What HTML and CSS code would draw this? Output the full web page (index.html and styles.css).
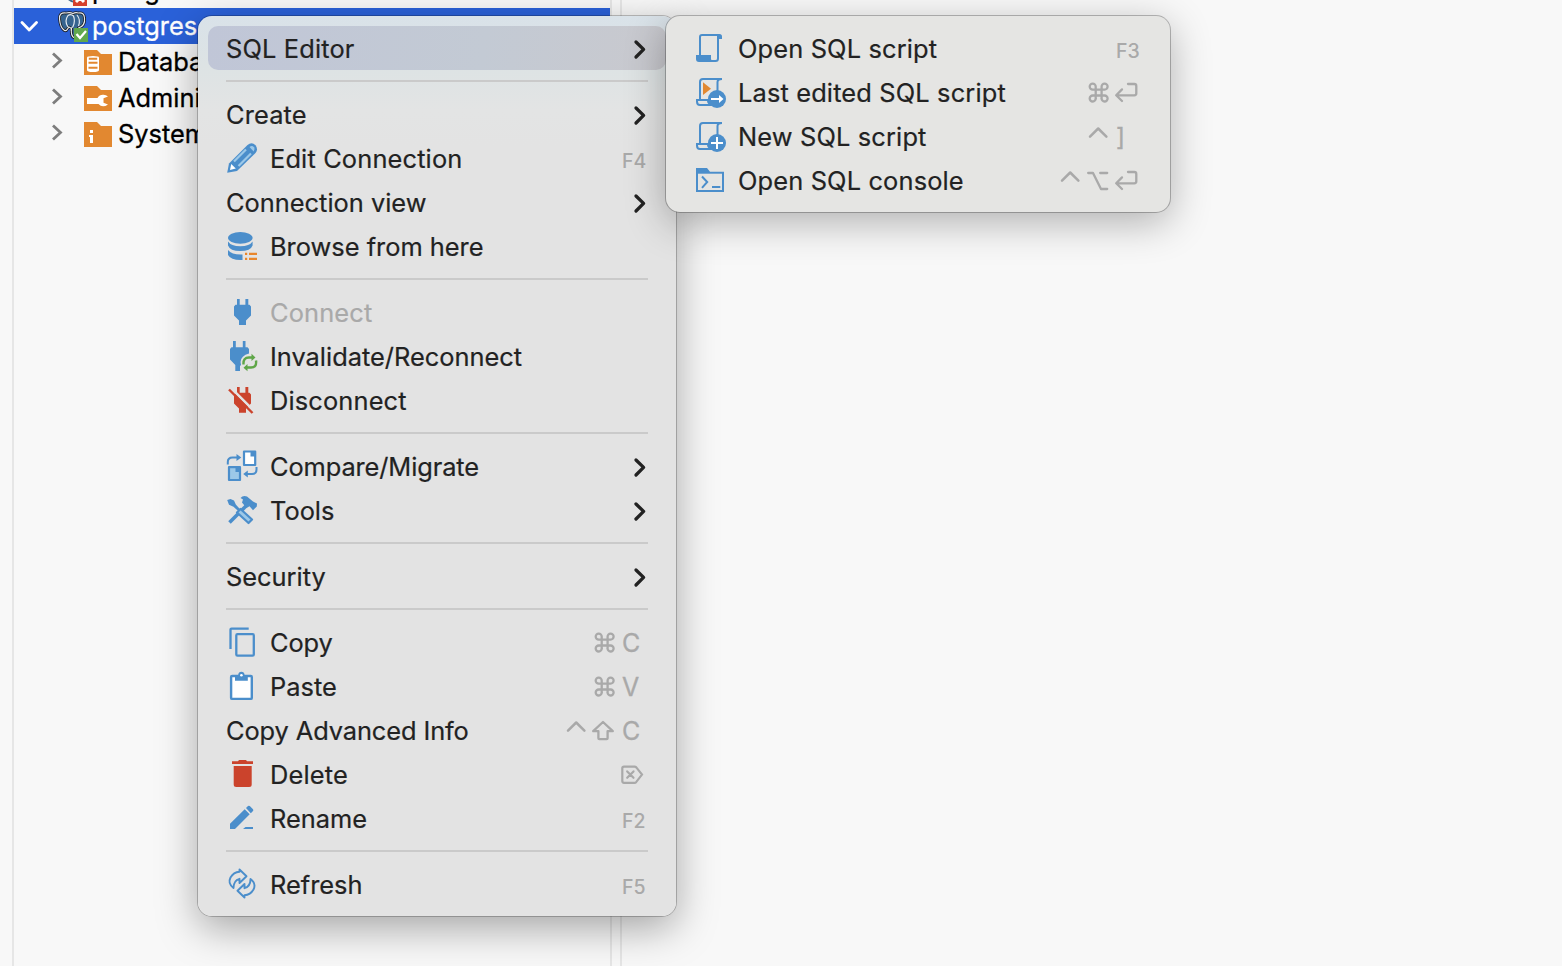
FILE: index.html
```html
<!DOCTYPE html>
<html lang="en">
<head>
<meta charset="utf-8">
<title>Database Navigator</title>
<link rel="stylesheet" href="styles.css">
</head>
<body>
<svg class="defs" aria-hidden="true">
  <symbol id="arrow" viewBox="0 0 16 24"><path d="M4 5l7.600 7.400L4 20" fill="none" stroke="#222" stroke-width="3.300" stroke-linecap="round" stroke-linejoin="round"/></symbol>
  <symbol id="k-cmd" viewBox="0 0 28 28"><path d="M7.700 11.600H4.900a3 3 0 1 1 2.800-2.900V20.400a3 3 0 1 1-2.900-2.900H16.500a3 3 0 1 1-2.900 2.900V8.700a3 3 0 1 1 2.900 2.900z" fill="none" stroke="#a9a9a9" stroke-width="2.300"/></symbol>
  <symbol id="k-ctrl" viewBox="0 0 28 28"><path d="M2 14.700L10.200 6.500l8.200 8.200" fill="none" stroke="#a9a9a9" stroke-width="2.500" stroke-linecap="round" stroke-linejoin="round"/></symbol>
  <symbol id="k-shift" viewBox="0 0 28 28"><path d="M9 6L-.8 15.200H4.400V22.200q0 1 1 1H12.600q1 0 1-1V15.200H18.800z" fill="none" stroke="#a9a9a9" stroke-width="2.300" stroke-linejoin="round"/></symbol>
  <symbol id="k-ret" viewBox="0 0 28 28"><path d="M12 6h6.300q2 0 2 2v7.300q0 2-2 2H.4M6 11.400L.2 17.300L6 23" fill="none" stroke="#a9a9a9" stroke-width="2.300" stroke-linecap="round" stroke-linejoin="round"/></symbol>
  <symbol id="k-opt" viewBox="0 0 28 28"><path d="M.2 7H5L13 23H19.200M12.200 7H19.200" fill="none" stroke="#a9a9a9" stroke-width="2.300" stroke-linecap="round" stroke-linejoin="round"/></symbol>
  <symbol id="k-del" viewBox="0 0 28 28"><path d="M2 6.600H12.500q1 0 1.800.8L20 14.600L14.300 21.900q-.8.900-1.800.9H2q-1.700 0-1.700-1.700V8.300Q.3 6.600 2 6.600zM5.200 11.400l6.300 6.400m0-6.400l-6.300 6.400" fill="none" stroke="#a9a9a9" stroke-width="2.200" stroke-linecap="round"/></symbol>
</svg>

<div class="window">
  <aside class="navigator">
    <div class="node node-above">
      <svg class="node-icon" viewBox="0 0 32 32"><path d="M5 18q6 10 12 10h8" stroke="#45688a" stroke-width="2" fill="none"/><path d="M15 18h14v14H15z" fill="#d5402c"/><path d="M18 20l8 8m0-8l-8 8" stroke="#fff" stroke-width="3"/></svg>
      <span class="node-label">postgres</span>
    </div>
    <div class="node node-selected">
      <svg class="twisty" viewBox="0 0 18 16"><path d="M2 4.500l7.200 7.400L16.500 4.500" fill="none" stroke="#fff" stroke-width="2.800" stroke-linecap="round" stroke-linejoin="round"/></svg>
      <svg class="node-icon" viewBox="0 0 32 32">
        <path d="M8 3Q1 2 1.500 9q.8 9 5 11.500 2 .8 3-1.500l1.500-2 2.500 1.500q-1 8 3 9.500 4 .5 4-5v-5q7-2 6-10-.4-6-6-5-3-1-5.500.5Q12 2 8 3z" fill="#36648f" stroke="#191919" stroke-width="2.800"/>
        <path d="M8 3Q1 2 1.500 9q.8 9 5 11.500 2 .8 3-1.500l1.500-2 2.500 1.500q-1 8 3 9.500 4 .5 4-5v-5q7-2 6-10-.4-6-6-5-3-1-5.500.5Q12 2 8 3zM10 17Q6 11 10 5.500q3-2 5.500.5 2 5-.5 10.500-2 1-2 4M19 5q4 5 1.500 11" fill="none" stroke="#e4eaf0" stroke-width="1.200"/>
        <path d="M16 18h14v14H16z" fill="#61a84d"/><path d="M18.500 24l3.500 4 6-7" fill="none" stroke="#fff" stroke-width="2.300"/>
      </svg>
      <span class="node-label">postgres</span><span class="node-host">- localhost:5432</span>
    </div>
    <div class="node node-child">
      <svg class="twisty" viewBox="0 0 12 18"><path d="M2 2.500l7.500 7L2 16.500" fill="none" stroke="#7d7d7d" stroke-width="2.800"/></svg>
      <svg class="folder" viewBox="0 0 28 28"><path d="M0 3h13l4 4h11v21H0z" fill="#e28830"/><path d="M3 10.500q0-1.500 6-1.500t6 1.500V23q0 2-6 2t-6-2z" fill="#fff"/><path d="M4.800 11.800h8.400M4.500 15.800h9M4.500 20.800h9" fill="none" stroke="#e28830" stroke-width="1.900"/></svg>
      <span class="node-label">Databases</span>
    </div>
    <div class="node node-child">
      <svg class="twisty" viewBox="0 0 12 18"><path d="M2 2.500l7.500 7L2 16.500" fill="none" stroke="#7d7d7d" stroke-width="2.800"/></svg>
      <svg class="folder" viewBox="0 0 28 28"><path d="M0 3h13l4 4h11v21H0z" fill="#e28830"/><path d="M3 15h10.500q2-3.500 6-3.200 2.500 0 4.500 1.800l-4.500 1.600v4.600l4.500 1.600q-5.500 4-9.500-.4H3z" fill="#fff"/></svg>
      <span class="node-label">Administer</span>
    </div>
    <div class="node node-child">
      <svg class="twisty" viewBox="0 0 12 18"><path d="M2 2.500l7.500 7L2 16.500" fill="none" stroke="#7d7d7d" stroke-width="2.800"/></svg>
      <svg class="folder" viewBox="0 0 28 28"><path d="M0 3h13l4 4h11v21H0z" fill="#e28830"/><path d="M6 11h3v3H6zM5 16h4v8h-3v-6H5z" fill="#fff"/></svg>
      <span class="node-label">System Info</span>
    </div>
  </aside>
  <div class="sash"></div>
  <main class="editor"></main>
</div>

<div class="menu menu-main">
  <div class="item active"><span class="label wide">SQL Editor</span><svg class="arrow"><use href="#arrow"/></svg></div>
  <div class="sep"></div>
  <div class="item"><span class="label wide">Create</span><svg class="arrow"><use href="#arrow"/></svg></div>
  <div class="item">
    <svg class="icon" viewBox="0 0 32 32"><path d="M1.200 30.800L3 21.500 21.500 3q4.300-3.500 8 .3 3 4 0 7.700L11 29z" fill="#4b8ecb"/><path d="M8 19.500L20 7.500M12.500 24L25 11.500" stroke="#9cc8e8" stroke-width="2.200"/><path d="M23.500 5q2.500-2 4.500.2 1.500 2-.4 4.300z" fill="#9cc8e8"/><path d="M4 28l1.200-6 4.600 4.600z" fill="#fff"/></svg>
    <span class="label wide">Edit Connection</span><span class="keys fn">F4</span>
  </div>
  <div class="item"><span class="label">Connection view</span><svg class="arrow"><use href="#arrow"/></svg></div>
  <div class="item">
    <svg class="icon" viewBox="0 0 32 32"><g fill="#4b8ecb"><ellipse cx="14.300" cy="7.800" rx="12.300" ry="5.900"/><path d="M2 11.500q3 4.700 12.300 4.700t12.300-4.700v4q-2 5.500-12.300 5.500T2 15.500zM2 20q4 5 14.500 4.500V30Q5 30.500 2 25z"/></g><g fill="#e8862c"><path d="M19 22.700h2.200V25H19zM23 22.700h8V25h-8zM19 27.700h2.200V30H19zM23 27.700h8V30h-8z"/></g></svg>
    <span class="label">Browse from here</span>
  </div>
  <div class="sep"></div>
  <div class="item disabled">
    <svg class="icon" viewBox="0 0 32 32"><path d="M11 3h2.700v5.700h5.700V3h2.900v5.700h1.200L25 10.500V19.500L20 24.500V29h-7v-4.500L8 19.500v-9l1.500-1.800H11z" fill="#4b8ecb"/></svg>
    <span class="label wide">Connect</span>
  </div>
  <div class="item">
    <svg class="icon" viewBox="0 0 32 32"><path d="M7 1h2.800v6.300h7V1h2.700v6.300h2L23 9v4.500q-8 2-8.500 8.500l.5 3-1 1v5H9.300v-6L4 19.500V9l1.500-1.700H7z" fill="#4b8ecb"/><path d="M17.500 24.500Q17 17.500 23 17.500h4M30 20.500Q31 27.500 25 27.500h-4" fill="none" stroke="#5fa648" stroke-width="2.400"/><path d="M25.500 13.800l4 3.700-4 3.500zM21.500 24l-4 3.700 4 3.500z" fill="#5fa648"/></svg>
    <span class="label">Invalidate/Reconnect</span>
  </div>
  <div class="item">
    <svg class="icon" viewBox="0 0 32 32"><path d="M11 3h2.700v5.700h5.700V3h2.900v5.700h1.200L25 10.500V19.500L20 24.500V28.700h-7v-4.200L8 19.500v-9l3-1.800z" fill="#cb432c"/><path d="M4.700 3.600l23.500 23.500" stroke="#e3e3e3" stroke-width="2.600"/><path d="M3 5.500l23.500 23.500" stroke="#cb432c" stroke-width="2.400"/></svg>
    <span class="label wide">Disconnect</span>
  </div>
  <div class="sep"></div>
  <div class="item">
    <svg class="icon" viewBox="0 0 32 32"><path d="M18 1.500h11.200V15H18z" fill="#fff" stroke="#4b8ecb" stroke-width="2.200" stroke-linejoin="round"/><path d="M24.500 1H30v5.500h-5.500z" fill="#4b8ecb"/><path d="M3 17.200h11V30H3z" fill="#9cc8e8" stroke="#4b8ecb" stroke-width="2.200" stroke-linejoin="round"/><path d="M9.500 17h5v5h-5z" fill="#4b8ecb"/><path d="M1.800 14.500V12q0-4.500 4.700-4.500H12M30.500 17v2.500q0 4.500-4.500 4.500h-6" fill="none" stroke="#4b8ecb" stroke-width="2"/><path d="M10.500 4l4.800 3.500-4.800 3.500zM21.800 20.500L17.200 24l4.600 3.500z" fill="#4b8ecb"/></svg>
    <span class="label tight">Compare/Migrate</span><svg class="arrow"><use href="#arrow"/></svg>
  </div>
  <div class="item">
    <svg class="icon" viewBox="0 0 32 32"><path d="M3.500 28.500L20 12" stroke="#4b8ecb" stroke-width="3.600"/><path d="M14.500 4Q17 1 21 2.500l6 5L31 9.500l-.2 3L27 16.200l-3.500-4-3 1.800L16 8.500l1-3z" fill="#4b8ecb"/><path d="M1.200 6L4.500 5l3.500 1.500 1.800 4 4.500 5-1.800 1.800-5-4.500-4.500-2z" fill="#4b8ecb"/><path d="M14.500 15l11.500 10.500-3.500 3.500L11 18.500z" fill="#9cc8e8" stroke="#4b8ecb" stroke-width="2.200" stroke-linejoin="round"/></svg>
    <span class="label">Tools</span><svg class="arrow"><use href="#arrow"/></svg>
  </div>
  <div class="sep"></div>
  <div class="item"><span class="label">Security</span><svg class="arrow"><use href="#arrow"/></svg></div>
  <div class="sep"></div>
  <div class="item">
    <svg class="icon" viewBox="0 0 32 32"><path d="M22.700 2.600H5.500q-1 0-1 1V23" fill="none" stroke="#4b8ecb" stroke-width="2.300"/><rect x="10.300" y="8.200" width="17.500" height="21.500" rx="1.200" fill="none" stroke="#4b8ecb" stroke-width="2.300"/></svg>
    <span class="label tight">Copy</span><span class="keys"><svg><use href="#k-cmd"/></svg><b>C</b></span>
  </div>
  <div class="item">
    <svg class="icon" viewBox="0 0 32 32"><rect x="5.100" y="6" width="20.700" height="22.900" rx="1" fill="#fff" stroke="#4b8ecb" stroke-width="2.400"/><path d="M9 5h3.200q.3-3.300 3.200-3.300T18.600 5h3.200v5.800H9z" fill="#4b8ecb"/><circle cx="15.400" cy="5.200" r="1.300" fill="#fff"/></svg>
    <span class="label">Paste</span><span class="keys"><svg><use href="#k-cmd"/></svg><b>V</b></span>
  </div>
  <div class="item"><span class="label tight">Copy Advanced Info</span><span class="keys"><svg><use href="#k-ctrl"/></svg><svg><use href="#k-shift"/></svg><b>C</b></span></div>
  <div class="item">
    <svg class="icon" viewBox="0 0 32 32"><path d="M6 3.300h6L13 2h7l1 1.300h6V6H6zM7.700 8H25.700V26.500q0 2.500-2.500 2.500h-13q-2.500 0-2.500-2.500z" fill="#cb432c"/></svg>
    <span class="label wide">Delete</span><span class="keys"><svg><use href="#k-del"/></svg></span>
  </div>
  <div class="item">
    <svg class="icon" viewBox="0 0 32 32"><path d="M4 21.700L18.700 7.300l5 5L9 27H4zM20 6l2-2q.9-.7 1.800 0L27 7.300q.7.900 0 1.800l-2.200 2.100zM19.500 25H27v2H17z" fill="#4b8ecb"/></svg>
    <span class="label">Rename</span><span class="keys fn">F2</span>
  </div>
  <div class="sep"></div>
  <div class="item">
    <svg class="icon" viewBox="0 0 32 32"><g fill="none" stroke="#4b8ecb" stroke-width="1.900" stroke-linejoin="round"><path d="M7.500 20Q1.500 15.500 4.500 9.500q3-5.300 9-5.800V1.500L20.500 8.300l-7 6.700v-4.200Q7.500 12.500 7.500 20z"/><path d="M7.500 20Q1.500 15.500 4.500 9.500q3-5.300 9-5.800V1.500L20.500 8.300l-7 6.700v-4.200Q7.500 12.500 7.500 20z" transform="rotate(180 16 15.500)"/></g></svg>
    <span class="label">Refresh</span><span class="keys fn">F5</span>
  </div>
</div>

<div class="menu menu-sub">
  <div class="item">
    <svg class="icon" viewBox="0 0 32 32"><path d="M6 24V5q0-2 2-2h16v23.500q0 2.500-2.500 2.500h-5.500" fill="none" stroke="#4b8ecb" stroke-width="2"/><path d="M23 2h2.500Q28 2 28 4.500V7h-4zM2 23h15v4q0 1.500 2 2v1H5q-3 0-3-3z" fill="#4b8ecb"/></svg>
    <span class="label wide">Open SQL script</span><span class="keys fn">F3</span>
  </div>
  <div class="item">
    <svg class="icon" viewBox="0 0 32 32"><path d="M6 24V6q0-3 3-3h19M28 3q-4.500 0-4.500 3v9M15 24H3v1.500Q3 29 6 29h11M14 24.500q0 3 3 4" fill="none" stroke="#4b8ecb" stroke-width="2"/><path d="M9 6.300V19l8-6.300z" fill="#e28830"/><circle cx="23" cy="23" r="9" fill="#4b8ecb"/><path d="M17 23h10" stroke="#fff" stroke-width="2"/><path d="M25 19l4.500 4-4.500 4z" fill="#fff"/></svg>
    <span class="label wide">Last edited SQL script</span><span class="keys"><svg><use href="#k-cmd"/></svg><svg><use href="#k-ret"/></svg></span>
  </div>
  <div class="item">
    <svg class="icon" viewBox="0 0 32 32"><path d="M6 24V6q0-3 3-3h19M28 3q-4.500 0-4.500 3v9M15 24H3v1.500Q3 29 6 29h11M14 24.500q0 3 3 4" fill="none" stroke="#4b8ecb" stroke-width="2"/><circle cx="23" cy="23" r="9" fill="#4b8ecb"/><path d="M17 23h12M23 17v12" stroke="#fff" stroke-width="2"/></svg>
    <span class="label wide">New SQL script</span><span class="keys"><svg><use href="#k-ctrl"/></svg><b>]</b></span>
  </div>
  <div class="item">
    <svg class="icon" viewBox="0 0 32 32"><path d="M2 4h11l3 3.700h14V28H2z" fill="#4b8ecb"/><path d="M4 9.700h24V26H4z" fill="#e5e5e3"/><path d="M8 12.500l5.200 5.500L8 23.800M18 23h8.300" fill="none" stroke="#4b8ecb" stroke-width="2"/></svg>
    <span class="label wide">Open SQL console</span><span class="keys"><svg><use href="#k-ctrl"/></svg><svg><use href="#k-opt"/></svg><svg><use href="#k-ret"/></svg></span>
  </div>
</div>
</body>
</html>
```
FILE: styles.css
```css
* { box-sizing: border-box; }

body {
  margin: 0;
  width: 1562px;
  height: 966px;
  overflow: hidden;
  background: #f8f8f8;
  font-family: Inter, "Liberation Sans", sans-serif;
  color: #222;
}

svg { display: block; flex: none; }
.defs { position: absolute; width: 0; height: 0; }

.window { display: flex; height: 966px; }

.navigator {
  width: 600px;
  margin-left: 12px;
  border-left: 2px solid #e6e6e6;
  border-right: 2px solid #e6e6e6;
  overflow: hidden;
}

.sash { width: 10px; border-right: 2px solid #e6e6e6; }
.editor { flex: 1; }

.node {
  display: flex;
  align-items: center;
  height: 36px;
  font-size: 25.4px;
  color: #000;
  white-space: nowrap;
}
.node-label {
  padding-bottom: 2px;
  -webkit-text-stroke: 0.3px currentColor;
}
.node-above { margin-top: -28px; padding-left: 44px; }
.node-above .node-icon { margin-right: 2px; }
.node-selected { padding-left: 6px; background: #2a61d9; color: #fff; }
.node-selected .twisty { width: 18px; height: 16px; margin-right: 20px; }
.node-icon { width: 32px; height: 32px; margin-right: 2px; }
.node-host { margin-left: 8px; padding-bottom: 2px; color: #8d7775; }
.node-child { padding-left: 37px; }
.node-child .twisty { width: 12px; height: 18px; margin: 0 21px 4px 0; }
.folder { width: 28px; height: 28px; margin: 0 6px 2px 0; }

.menu {
  position: absolute;
  top: 16px;
  padding: 10px;
  border-radius: 14px;
}
.menu-main {
  left: 198px;
  width: 478px;
  height: 900px;
  background: linear-gradient(180deg, #d9e2e9 0, #dde3e4 50px, #e3e4e4 95px, #e3e3e3 130px);
  box-shadow: 0 0 0 1px rgba(0, 0, 0, 0.22), 0 12px 40px rgba(0, 0, 0, 0.34);
}
.menu-sub {
  left: 666px;
  width: 504px;
  height: 196px;
  background: #e5e5e3;
  box-shadow: 0 0 0 1px rgba(0, 0, 0, 0.25), 0 10px 40px rgba(0, 0, 0, 0.3);
}

.item {
  display: flex;
  align-items: center;
  height: 44px;
  padding: 0 16px 0 18px;
  border-radius: 10px;
}
.active { background: linear-gradient(100deg, #c0c6d7, #c3cad4 60%, #c9c9ce); }
.icon { width: 32px; height: 32px; margin-right: 12px; }
.label {
  flex: 1;
  padding-top: 2px;
  font-size: 25.4px;
  line-height: 44px;
  white-space: nowrap;
  -webkit-text-stroke: 0.2px currentColor;
}
.wide { letter-spacing: 0.15px; }
.tight { letter-spacing: -0.1px; }
.disabled .label { color: #a9a9a9; }
.arrow { width: 16px; height: 24px; margin: 1px 2px 0 0; }

.sep {
  height: 2px;
  margin: 10px 18px;
  background: #cacaca;
}

.keys { display: flex; color: #a9a9a9; font-size: 25px; line-height: 28px; }
.keys svg { width: 28px; height: 28px; overflow: visible; }
.keys b { width: 28px; padding-top: 1px; font-weight: 400; -webkit-text-stroke: 0.3px currentColor; }
.fn { width: 28px; padding-top: 5px; font-size: 19.5px; font-weight: 500; }
symbol { overflow: visible; }
```
